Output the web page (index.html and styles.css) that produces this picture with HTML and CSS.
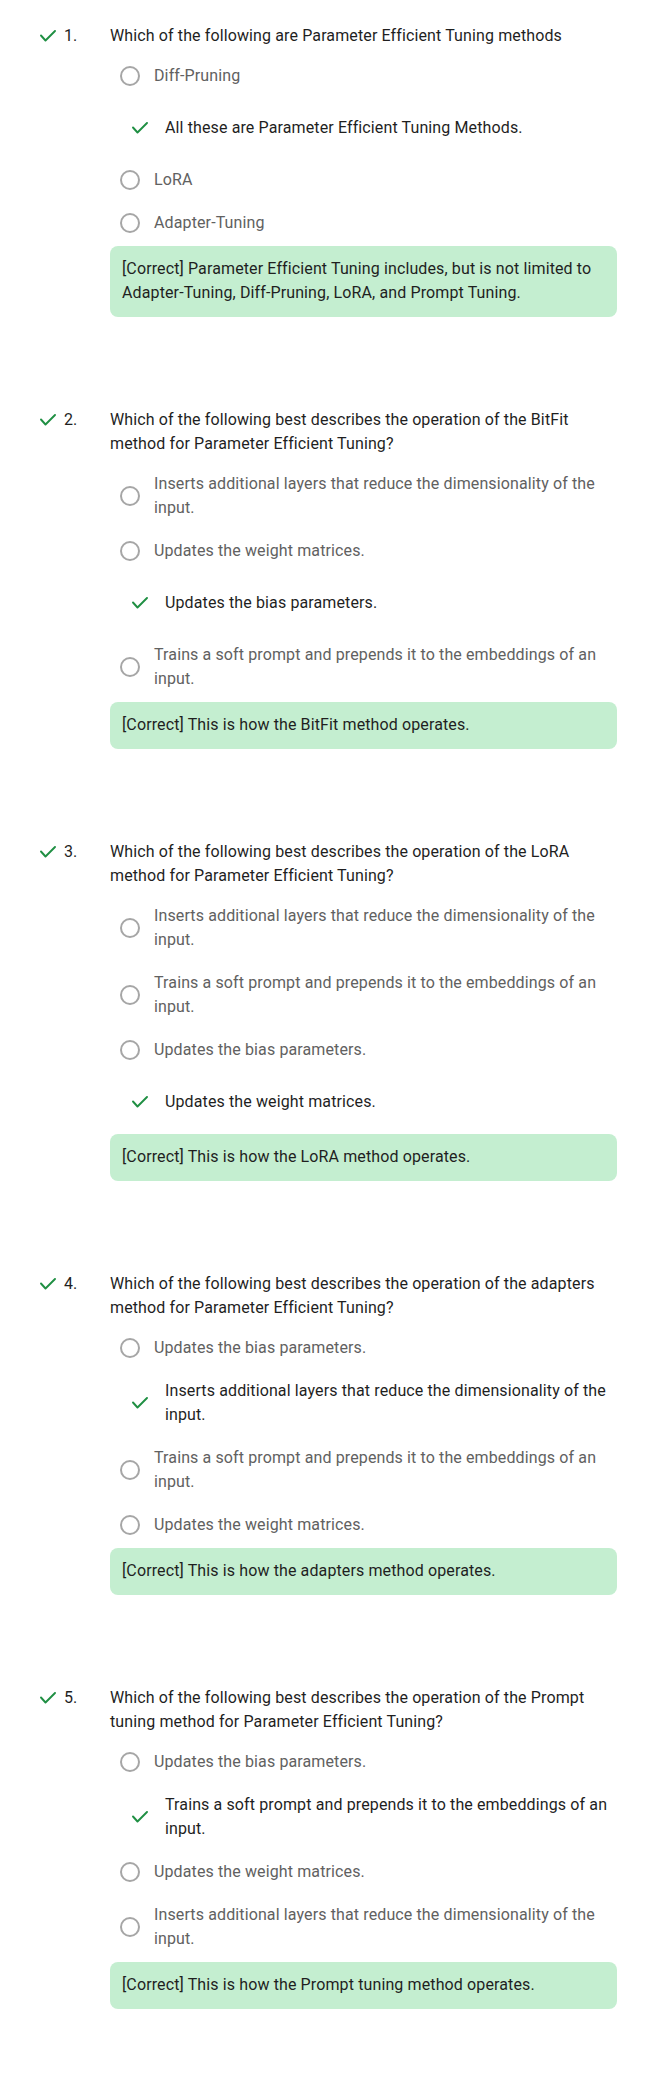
FILE: index.html
```html
<!DOCTYPE html>
<html lang="en">
<head>
<meta charset="utf-8">
<title>Quiz</title>
<link rel="stylesheet" href="styles.css">
</head>
<body>
<main class="page">

  <section class="question">
    <div class="q-head">
      <div class="q-mark">
        <svg class="check" viewBox="0 0 16 12" width="16" height="12"><polyline points="1,5.5 5.5,10.5 15,1" /></svg>
        <span class="q-num">1.</span>
      </div>
      <div class="q-text">Which of the following are Parameter Efficient Tuning methods</div>
    </div>
    <div class="options">
      <div class="option"><span class="radio"></span><span class="opt-text">Diff-Pruning</span></div>
      <div class="option selected"><svg class="check" viewBox="0 0 16 12" width="16" height="12"><polyline points="1,5.5 5.5,10.5 15,1" /></svg><span class="opt-text">All these are Parameter Efficient Tuning Methods.</span></div>
      <div class="option"><span class="radio"></span><span class="opt-text">LoRA</span></div>
      <div class="option"><span class="radio"></span><span class="opt-text">Adapter-Tuning</span></div>
    </div>
    <div class="feedback">[Correct] Parameter Efficient Tuning includes, but is not limited to Adapter-Tuning, Diff-Pruning, LoRA, and Prompt Tuning.</div>
  </section>

  <section class="question">
    <div class="q-head">
      <div class="q-mark">
        <svg class="check" viewBox="0 0 16 12" width="16" height="12"><polyline points="1,5.5 5.5,10.5 15,1" /></svg>
        <span class="q-num">2.</span>
      </div>
      <div class="q-text">Which of the following best describes the operation of the BitFit method for Parameter Efficient Tuning?</div>
    </div>
    <div class="options">
      <div class="option"><span class="radio"></span><span class="opt-text">Inserts additional layers that reduce the dimensionality of the input.</span></div>
      <div class="option"><span class="radio"></span><span class="opt-text">Updates the weight matrices.</span></div>
      <div class="option selected"><svg class="check" viewBox="0 0 16 12" width="16" height="12"><polyline points="1,5.5 5.5,10.5 15,1" /></svg><span class="opt-text">Updates the bias parameters.</span></div>
      <div class="option"><span class="radio"></span><span class="opt-text">Trains a soft prompt and prepends it to the embeddings of an input.</span></div>
    </div>
    <div class="feedback">[Correct] This is how the BitFit method operates.</div>
  </section>

  <section class="question">
    <div class="q-head">
      <div class="q-mark">
        <svg class="check" viewBox="0 0 16 12" width="16" height="12"><polyline points="1,5.5 5.5,10.5 15,1" /></svg>
        <span class="q-num">3.</span>
      </div>
      <div class="q-text">Which of the following best describes the operation of the LoRA method for Parameter Efficient Tuning?</div>
    </div>
    <div class="options">
      <div class="option"><span class="radio"></span><span class="opt-text">Inserts additional layers that reduce the dimensionality of the input.</span></div>
      <div class="option"><span class="radio"></span><span class="opt-text">Trains a soft prompt and prepends it to the embeddings of an input.</span></div>
      <div class="option"><span class="radio"></span><span class="opt-text">Updates the bias parameters.</span></div>
      <div class="option selected"><svg class="check" viewBox="0 0 16 12" width="16" height="12"><polyline points="1,5.5 5.5,10.5 15,1" /></svg><span class="opt-text">Updates the weight matrices.</span></div>
    </div>
    <div class="feedback">[Correct] This is how the LoRA method operates.</div>
  </section>

  <section class="question">
    <div class="q-head">
      <div class="q-mark">
        <svg class="check" viewBox="0 0 16 12" width="16" height="12"><polyline points="1,5.5 5.5,10.5 15,1" /></svg>
        <span class="q-num">4.</span>
      </div>
      <div class="q-text">Which of the following best describes the operation of the adapters method for Parameter Efficient Tuning?</div>
    </div>
    <div class="options">
      <div class="option"><span class="radio"></span><span class="opt-text">Updates the bias parameters.</span></div>
      <div class="option selected"><svg class="check" viewBox="0 0 16 12" width="16" height="12"><polyline points="1,5.5 5.5,10.5 15,1" /></svg><span class="opt-text">Inserts additional layers that reduce the dimensionality of the input.</span></div>
      <div class="option"><span class="radio"></span><span class="opt-text">Trains a soft prompt and prepends it to the embeddings of an input.</span></div>
      <div class="option"><span class="radio"></span><span class="opt-text">Updates the weight matrices.</span></div>
    </div>
    <div class="feedback">[Correct] This is how the adapters method operates.</div>
  </section>

  <section class="question">
    <div class="q-head">
      <div class="q-mark">
        <svg class="check" viewBox="0 0 16 12" width="16" height="12"><polyline points="1,5.5 5.5,10.5 15,1" /></svg>
        <span class="q-num">5.</span>
      </div>
      <div class="q-text">Which of the following best describes the operation of the Prompt tuning method for Parameter Efficient Tuning?</div>
    </div>
    <div class="options">
      <div class="option"><span class="radio"></span><span class="opt-text">Updates the bias parameters.</span></div>
      <div class="option selected"><svg class="check" viewBox="0 0 16 12" width="16" height="12"><polyline points="1,5.5 5.5,10.5 15,1" /></svg><span class="opt-text">Trains a soft prompt and prepends it to the embeddings of an input.</span></div>
      <div class="option"><span class="radio"></span><span class="opt-text">Updates the weight matrices.</span></div>
      <div class="option"><span class="radio"></span><span class="opt-text">Inserts additional layers that reduce the dimensionality of the input.</span></div>
    </div>
    <div class="feedback">[Correct] This is how the Prompt tuning method operates.</div>
  </section>

</main>
</body>
</html>
```
FILE: styles.css
```css
html, body {
  margin: 0;
  padding: 0;
  background: #ffffff;
}

body {
  font-family: Roboto, "Liberation Sans", Arial, sans-serif;
  font-size: 16px;
  line-height: 24px;
  letter-spacing: 0.12px;
  color: #1f1f1f;
}

.page {
  padding: 24px 47px 40px 40px;
  display: flex;
  flex-direction: column;
  gap: 91px;
}

.question {
  display: flex;
  flex-direction: column;
}

.q-head {
  display: flex;
  align-items: flex-start;
}

.q-mark {
  flex: 0 0 70px;
  display: flex;
  align-items: center;
  gap: 8px;
  height: 24px;
}

.check {
  display: block;
  flex: 0 0 16px;
  fill: none;
  stroke: #1f8f43;
  stroke-width: 1.9;
  stroke-linecap: round;
  stroke-linejoin: round;
}

.q-num {
  color: #1f1f1f;
}

.q-text {
  flex: 1;
  color: #1f1f1f;
}

.options {
  margin: 6px 0 0 70px;
  display: flex;
  flex-direction: column;
}

.option {
  display: flex;
  align-items: center;
  padding: 10px 0 9px 10px;
  color: #616161;
}

.radio {
  flex: 0 0 auto;
  width: 20px;
  height: 20px;
  box-sizing: border-box;
  border: 2px solid #a6a6a6;
  border-radius: 50%;
  margin-right: 14px;
}

.opt-text {
  flex: 1;
}

.option.selected {
  padding-left: 22px;
  min-height: 42px;
  color: #1f1f1f;
}

.option.selected .check {
  margin-right: 17px;
}

.feedback {
  margin: 2px 0 0 70px;
  padding: 11px 12px 12px;
  background: #c4eed0;
  border-radius: 8px;
  color: #1f1f1f;
}
```
